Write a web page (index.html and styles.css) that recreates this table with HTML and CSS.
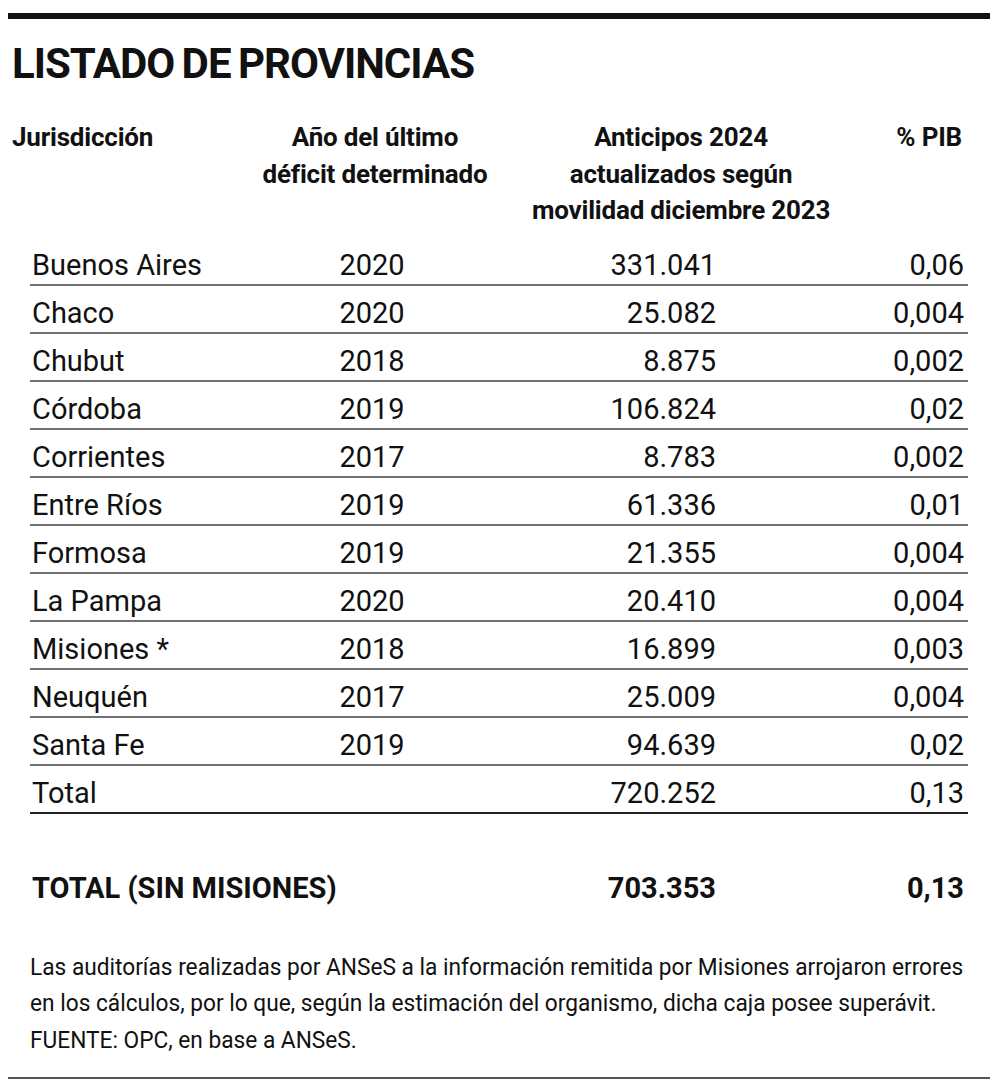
FILE: index.html
```html
<!DOCTYPE html>
<html lang="es">
<head>
<meta charset="utf-8">
<title>Listado de provincias</title>
<link rel="stylesheet" href="styles.css">
</head>
<body>
<div class="page">
  <div class="topbar"></div>
  <h1 class="title">LISTADO DE PROVINCIAS</h1>
  <div class="head">
    <div class="h-name">Jurisdicción</div>
    <div class="h-year">Año del último<br>déficit determinado</div>
    <div class="h-amt">Anticipos 2024<br>actualizados según<br>movilidad diciembre 2023</div>
    <div class="h-pib">% PIB</div>
  </div>
  <div class="rows">
    <div class="row"><span class="c-name">Buenos Aires</span><span class="c-year">2020</span><span class="c-amt">331.041</span><span class="c-pib">0,06</span></div>
    <div class="row"><span class="c-name">Chaco</span><span class="c-year">2020</span><span class="c-amt">25.082</span><span class="c-pib">0,004</span></div>
    <div class="row"><span class="c-name">Chubut</span><span class="c-year">2018</span><span class="c-amt">8.875</span><span class="c-pib">0,002</span></div>
    <div class="row"><span class="c-name">Córdoba</span><span class="c-year">2019</span><span class="c-amt">106.824</span><span class="c-pib">0,02</span></div>
    <div class="row"><span class="c-name">Corrientes</span><span class="c-year">2017</span><span class="c-amt">8.783</span><span class="c-pib">0,002</span></div>
    <div class="row"><span class="c-name">Entre Ríos</span><span class="c-year">2019</span><span class="c-amt">61.336</span><span class="c-pib">0,01</span></div>
    <div class="row"><span class="c-name">Formosa</span><span class="c-year">2019</span><span class="c-amt">21.355</span><span class="c-pib">0,004</span></div>
    <div class="row"><span class="c-name">La Pampa</span><span class="c-year">2020</span><span class="c-amt">20.410</span><span class="c-pib">0,004</span></div>
    <div class="row"><span class="c-name">Misiones *</span><span class="c-year">2018</span><span class="c-amt">16.899</span><span class="c-pib">0,003</span></div>
    <div class="row"><span class="c-name">Neuquén</span><span class="c-year">2017</span><span class="c-amt">25.009</span><span class="c-pib">0,004</span></div>
    <div class="row"><span class="c-name">Santa Fe</span><span class="c-year">2019</span><span class="c-amt">94.639</span><span class="c-pib">0,02</span></div>
    <div class="row row-total"><span class="c-name">Total</span><span class="c-year"></span><span class="c-amt">720.252</span><span class="c-pib">0,13</span></div>
  </div>
  <div class="row row-grand"><span class="c-name">TOTAL (SIN MISIONES)</span><span class="c-year"></span><span class="c-amt">703.353</span><span class="c-pib">0,13</span></div>
  <div class="note">
    <p>Las auditorías realizadas por ANSeS a la información remitida por Misiones arrojaron errores</p>
    <p>en los cálculos, por lo que, según la estimación del organismo, dicha caja posee superávit.</p>
    <p>FUENTE: OPC, en base a ANSeS.</p>
  </div>
  <div class="bottombar"></div>
</div>
</body>
</html>
```

FILE: styles.css
```css
html, body {
  margin: 0;
  padding: 0;
  background: #fff;
}
body {
  font-family: Roboto, "Liberation Sans", sans-serif;
  color: #111;
  width: 1000px;
  height: 1092px;
  overflow: hidden;
}
.page {
  padding: 13px 10px 0 8px;
}
.topbar {
  height: 6px;
  background: #111;
  width: 982px;
}
.title {
  margin: 21px 0 0 4px;
  font-size: 42px;
  line-height: 48px;
  font-weight: 700;
  letter-spacing: -1px;
  word-spacing: -2px;
}
.head {
  display: grid;
  grid-template-columns: 238px 250px 362px 100px;
  margin: 31px 0 0 4px;
  font-size: 26px;
  font-weight: 700;
  line-height: 36.5px;
  letter-spacing: -0.2px;
}
.h-name { text-align: left; }
.h-year { text-align: center; }
.h-amt { text-align: center; }
.h-pib { text-align: right; }
.rows {
  margin: 9px 0 0 22px;
  width: 938px;
}
.row {
  display: grid;
  grid-template-columns: 262px 160px 264px 250px;
  height: 38px;
  padding-top: 8px;
  align-items: center;
  font-size: 29px;
  border-bottom: 2px solid #6f6f6f;
  box-sizing: content-box;
}
.row-total {
  border-bottom-color: #222;
}
.c-name { padding-left: 2px; white-space: nowrap; }
.c-year { text-align: center; }
.c-amt { text-align: right; }
.c-pib { text-align: right; padding-right: 2px; }
.row-grand {
  margin: 47px 0 0 22px;
  width: 938px;
  border-bottom: none;
  font-weight: 700;
}
.note {
  margin: 42px 0 0 22px;
  font-size: 24px;
  line-height: 36.5px;
  transform: scaleX(0.945);
  transform-origin: left center;
}
.note p {
  margin: 0;
  white-space: nowrap;
}
.bottombar {
  margin-top: 19px;
  height: 2px;
  background: #555;
  width: 982px;
}
```
